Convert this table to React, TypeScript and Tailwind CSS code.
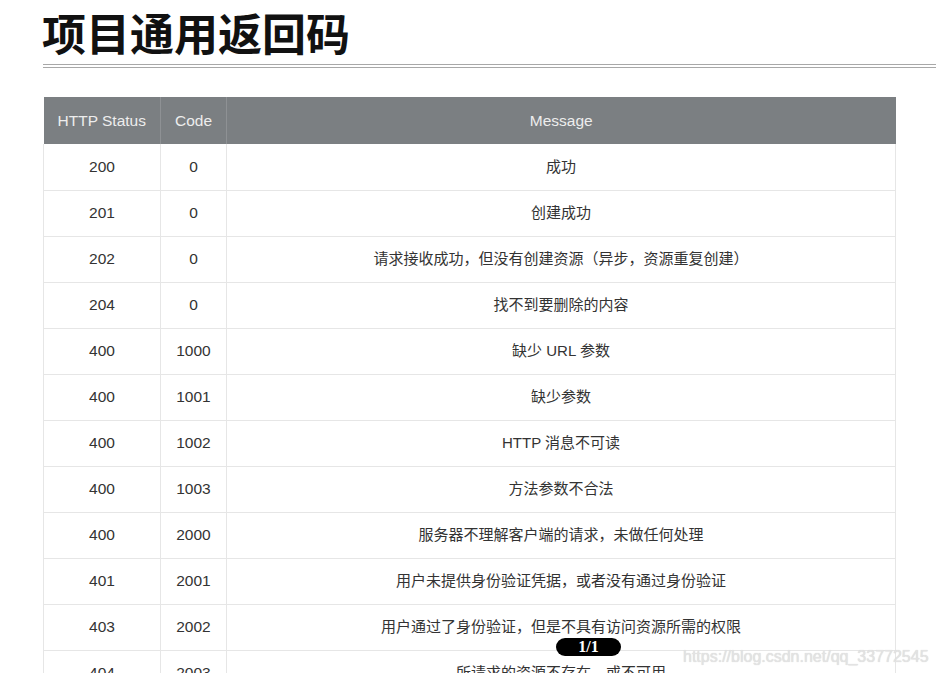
import React from "react";

interface CodeRow {
  status: string;
  code: string;
  message: string;
}

const rows: CodeRow[] = [
  { status: "200", code: "0", message: "成功" },
  { status: "201", code: "0", message: "创建成功" },
  { status: "202", code: "0", message: "请求接收成功，但没有创建资源（异步，资源重复创建）" },
  { status: "204", code: "0", message: "找不到要删除的内容" },
  { status: "400", code: "1000", message: "缺少 URL 参数" },
  { status: "400", code: "1001", message: "缺少参数" },
  { status: "400", code: "1002", message: "HTTP 消息不可读" },
  { status: "400", code: "1003", message: "方法参数不合法" },
  { status: "400", code: "2000", message: "服务器不理解客户端的请求，未做任何处理" },
  { status: "401", code: "2001", message: "用户未提供身份验证凭据，或者没有通过身份验证" },
  { status: "403", code: "2002", message: "用户通过了身份验证，但是不具有访问资源所需的权限" },
  { status: "404", code: "2003", message: "所请求的资源不存在，或不可用" },
];

const cellFont = {
  fontFamily: '"Liberation Sans", Arial, "Noto Sans CJK SC", sans-serif',
};

export default function App() {
  return (
    <div className="relative h-[673px] w-[936px] overflow-hidden bg-white" style={cellFont}>
      <h1
        className="ml-[42px] text-[44px] font-bold leading-[64px] text-[#111]"
        style={{ fontFamily: '"Noto Sans CJK SC", sans-serif' }}
      >
        项目通用返回码
      </h1>

      <div className="ml-[43px] h-[4px] border-y border-[#a8a8a8]" />

      <table className="ml-[43px] mt-[29px] w-[853px] table-fixed border-collapse text-[15.5px] text-[#333]">
        <colgroup>
          <col className="w-[117px]" />
          <col className="w-[66px]" />
          <col />
        </colgroup>
        <thead>
          <tr className="h-[47px] bg-[#7b7f82] text-[#ededed]">
            <th className="border-r border-[#8e9194] font-normal">HTTP Status</th>
            <th className="border-r border-[#8e9194] font-normal">Code</th>
            <th className="font-normal">Message</th>
          </tr>
        </thead>
        <tbody>
          {rows.map((row, i) => (
            <tr key={i} className="h-[46px] border-b border-[#e6e6e6]">
              <td className="border-x border-[#e6e6e6] text-center">{row.status}</td>
              <td className="border-r border-[#e6e6e6] text-center">{row.code}</td>
              <td className="border-r border-[#e6e6e6] text-center text-[15px]">{row.message}</td>
            </tr>
          ))}
        </tbody>
      </table>

      <div
        className="absolute left-[556px] top-[638px] flex h-[18px] w-[65px] items-center justify-center rounded-full bg-black text-[16px] font-bold leading-none text-white"
        style={{ fontFamily: '"Liberation Serif", serif' }}
      >
        1/1
      </div>

      <div className="absolute left-[683px] top-[645px] text-[16px] text-[#e3e3e3] [text-shadow:0_0_1px_#cfcfcf]">
        https://blog.csdn.net/qq_33772545
      </div>
    </div>
  );
}
